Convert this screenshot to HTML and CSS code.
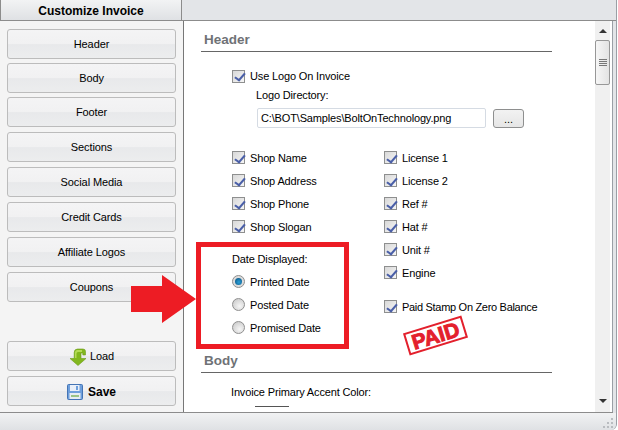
FILE: index.html
```html
<!DOCTYPE html>
<html lang="en">
<head>
    <meta charset="UTF-8">
    <title>Customize Invoice</title>
    <link rel="stylesheet" href="styles.css">
</head>
<body>
    <div class="window">
        <div class="tab-bar">
            <div class="tab">Customize Invoice</div>
        </div>

        <div class="main">
            <aside class="sidebar">
                <div class="nav-list">
                    <button class="nav-btn tight">Header</button>
                    <button class="nav-btn tight">Body</button>
                    <button class="nav-btn">Footer</button>
                    <button class="nav-btn">Sections</button>
                    <button class="nav-btn">Social Media</button>
                    <button class="nav-btn">Credit Cards</button>
                    <button class="nav-btn">Affiliate Logos</button>
                    <button class="nav-btn">Coupons</button>
                </div>
                <div class="action-list">
                    <button class="nav-btn">
                        <svg class="load-icon" viewBox="0 0 18 18">
                            <path d="M8.500 1h5.500a2.500 2.500 0 0 1 2.500 2.500V7h-2.700V5h-1.800v5.500H17L9 17.500 1 10.500h4.200V4.500A3.500 3.500 0 0 1 8.500 1z" fill="#82b71f" stroke="#6b9c18" stroke-width=".6"/>
                            <path d="M8 2h5v2H9a1.500 1.500 0 0 0-1.500 1.500V10H6V4.500A2.500 2.500 0 0 1 8 2z" fill="#b4dc55"/>
                        </svg>
                        Load
                    </button>
                    <button class="nav-btn save">
                        <svg class="save-icon" viewBox="0 0 16 16">
                            <rect x=".5" y=".5" width="15" height="15" rx="1" fill="#6e9fdc" stroke="#4474b5"/>
                            <rect x="3" y="1" width="9.500" height="6" fill="#e9eff8"/>
                            <rect x="9" y="2" width="2" height="4" fill="#6e9fdc"/>
                            <rect x="2.500" y="9" width="11" height="6" fill="#e8eef2"/>
                            <rect x="4" y="11" width="8" height="2" fill="#9cc486"/>
                        </svg>
                        Save
                    </button>
                </div>
            </aside>

            <section class="panel">
                <div class="panel-body">
                    <h2 class="section-title">Header</h2>

                    <label class="check logo-check"><span class="box"></span>Use Logo On Invoice</label>
                    <div class="logo-dir">Logo Directory:</div>
                    <div class="dir-row">
                        <div class="dir-input">C:\BOT\Samples\BoltOnTechnology.png</div>
                        <button class="browse">...</button>
                    </div>

                    <div class="options">
                        <div class="col">
                            <label class="check"><span class="box"></span>Shop Name</label>
                            <label class="check"><span class="box"></span>Shop Address</label>
                            <label class="check"><span class="box"></span>Shop Phone</label>
                            <label class="check"><span class="box"></span>Shop Slogan</label>
                            <div class="date-label">Date Displayed:</div>
                            <label class="radio"><span class="dot on"></span>Printed Date</label>
                            <label class="radio"><span class="dot"></span>Posted Date</label>
                            <label class="radio"><span class="dot"></span>Promised Date</label>
                        </div>
                        <div class="col">
                            <label class="check"><span class="box"></span>License 1</label>
                            <label class="check"><span class="box"></span>License 2</label>
                            <label class="check"><span class="box"></span>Ref #</label>
                            <label class="check"><span class="box"></span>Hat #</label>
                            <label class="check"><span class="box"></span>Unit #</label>
                            <label class="check"><span class="box"></span>Engine</label>
                            <label class="check paid-check"><span class="box"></span>Paid Stamp On Zero Balance</label>
                            <div class="stamp"><span>PAID</span></div>
                        </div>
                    </div>

                    <h2 class="section-title">Body</h2>
                    <div class="accent-label">Invoice Primary Accent Color:</div>
                    <div class="swatch"></div>
                </div>

                <div class="scrollbar">
                    <div class="arrow up"></div>
                    <div class="thumb"><div class="grip"></div></div>
                    <div class="arrow down"></div>
                </div>
            </section>
        </div>

        <div class="status-bar">
            <svg class="size-grip" viewBox="0 0 12 12">
                <g fill="#b9bcc0">
                    <rect x="8" y="0" width="2" height="2"/>
                    <rect x="4" y="4" width="2" height="2"/>
                    <rect x="8" y="4" width="2" height="2"/>
                    <rect x="0" y="8" width="2" height="2"/>
                    <rect x="4" y="8" width="2" height="2"/>
                    <rect x="8" y="8" width="2" height="2"/>
                </g>
            </svg>
        </div>
    </div>

    <!-- annotation drawn over the screenshot -->
    <div class="mark-box"></div>
    <svg class="mark-arrow" viewBox="0 0 66 48">
        <path d="M1 11h31V0l34 24-34 24V37H1z" fill="#ed1c24"/>
    </svg>
</body>
</html>
```

FILE: styles.css
```css
* {
    margin: 0;
    padding: 0;
    box-sizing: border-box;
}

body {
    width: 618px;
    height: 430px;
    overflow: hidden;
    position: relative;
    font-family: "Liberation Sans", sans-serif;
    font-size: 11px;
    letter-spacing: -0.15px;
    color: #000;
    background-color: #fff;
}

.window {
    width: 617px;
    height: 430px;
    display: flex;
    flex-direction: column;
    background-color: #e3e5e8;
    border-right: 1px solid #9a9fa5;
    border-bottom-right-radius: 6px;
}

.tab-bar {
    height: 21px;
    flex-shrink: 0;
    border-bottom: 1px solid #8c8c8c;
}

.tab {
    width: 182px;
    height: 20px;
    border-left: 1px solid #8c8c8c;
    border-right: 1px solid #8c8c8c;
    background: linear-gradient(#f2f3f4, #dfe1e4);
    font-size: 12px;
    font-weight: 700;
    letter-spacing: 0;
    text-align: center;
    line-height: 22px;
}

.main {
    height: 392px;
    display: flex;
    flex-shrink: 0;
    margin-right: 3px;
    border-bottom: 1px solid #8c8c8c;
}

.sidebar {
    width: 184px;
    flex-shrink: 0;
    display: flex;
    flex-direction: column;
    padding: 8px 7px 0;
    background-color: #f4f4f4;
    border-right: 1px solid #777;
}

.nav-list {
    display: flex;
    flex-direction: column;
    gap: 5px;
}

.action-list {
    display: flex;
    flex-direction: column;
    gap: 5px;
    margin-top: 39px;
}

.nav-btn {
    height: 30px;
    width: 169px;
    flex-shrink: 0;
    display: flex;
    align-items: center;
    justify-content: center;
    gap: 3px;
    border: 1px solid #bcbcbc;
    border-radius: 3px;
    background: linear-gradient(#f4f4f5 0%, #f1f1f2 50%, #e8e9eb 52%, #ecedee 100%);
    font-family: inherit;
    font-size: 11px;
    letter-spacing: -0.1px;
    color: #000;
}

.nav-btn.tight {
    margin-bottom: -1px;
}

.nav-btn.save {
    font-size: 12px;
    font-weight: 700;
    letter-spacing: 0;
    gap: 5px;
    padding-top: 1px;
}

.load-icon {
    width: 18px;
    height: 18px;
    margin-top: 1px;
}

.save-icon {
    width: 16px;
    height: 16px;
}

.panel {
    flex: 1;
    display: flex;
    min-width: 0;
    background-color: #fff;
    border-right: 1px solid #9a9fa5;
}

.panel-body {
    flex: 1;
    padding: 11px 0 0 17px;
    overflow: hidden;
}

.section-title {
    width: 351px;
    height: 20px;
    padding-left: 3px;
    border-bottom: 1px solid #666;
    font-size: 13.500px;
    font-weight: 700;
    letter-spacing: 0;
    line-height: 15px;
    color: #6f7276;
}

.check, .radio {
    display: flex;
    align-items: center;
    gap: 5px;
    height: 23px;
}

.logo-check {
    margin: 12px 0 0 31px;
    height: 24px;
}

.logo-dir {
    margin: 0 0 0 55px;
    height: 20px;
    line-height: 15px;
}

.dir-row {
    display: flex;
    gap: 7px;
    margin-left: 56px;
    height: 20px;
}

.dir-input {
    width: 229px;
    height: 20px;
    padding-left: 3px;
    border: 1px solid #d5dbe3;
    border-radius: 2px;
    line-height: 19px;
}

.browse {
    width: 31px;
    height: 19px;
    margin-top: 1px;
    border: 1px solid #8e8f8f;
    border-radius: 3px;
    background: linear-gradient(#f2f2f2, #e6e6e6);
    font-family: inherit;
    font-size: 11px;
}

.options {
    display: flex;
    margin: 18px 0 0 31px;
    height: 207px;
}

.col {
    display: flex;
    flex-direction: column;
    position: relative;
}

.col:first-child {
    width: 152px;
}

.box {
    width: 13px;
    height: 13px;
    flex-shrink: 0;
    position: relative;
    border: 1px solid #8e8f8f;
    background: linear-gradient(135deg, #d8d8d8, #f6f6f6);
}

/* tick */
.box::after {
    content: "";
    position: absolute;
    left: 3.500px;
    top: 0.500px;
    width: 4px;
    height: 8px;
    border-right: 2px solid #4a5fa8;
    border-bottom: 2px solid #4a5fa8;
    transform: rotate(35deg) skewX(-6deg);
}

.date-label {
    height: 18px;
    margin-top: 14px;
    line-height: 15px;
}

.dot {
    width: 13px;
    height: 13px;
    flex-shrink: 0;
    position: relative;
    border: 1px solid #8f8f8f;
    border-radius: 50%;
    background: radial-gradient(circle at 60% 65%, #f6f6f6, #c4c4c4);
}

.dot.on {
    background: #dcdcdc;
}

.dot.on::after {
    content: "";
    position: absolute;
    left: 2px;
    top: 2px;
    width: 7px;
    height: 7px;
    border-radius: 50%;
    background: radial-gradient(circle at 55% 60%, #2aa0d8, #064a78);
}

.paid-check {
    margin-top: 11px;
    letter-spacing: -0.3px;
}

.stamp {
    position: absolute;
    left: 21px;
    top: 178px;
    width: 61px;
    height: 23px;
    display: flex;
    align-items: center;
    justify-content: center;
    border: 2px solid #e3202c;
    transform: rotate(-17deg);
    color: #e3202c;
    font-size: 21px;
    font-weight: 700;
    letter-spacing: 0;
    line-height: 1;
    -webkit-text-stroke: 1px #e3202c;
}

.accent-label {
    margin: 12px 0 0 30px;
    height: 15px;
    line-height: 15px;
}

.swatch {
    width: 34px;
    height: 4px;
    margin: 6px 0 0 54px;
    border-top: 1px solid #555;
}

.scrollbar {
    width: 15px;
    flex-shrink: 0;
    margin-right: 2px;
    display: flex;
    flex-direction: column;
    align-items: center;
    background-color: #f0f0f0;
}

.arrow {
    width: 0;
    height: 0;
    flex-shrink: 0;
    border-left: 4px solid transparent;
    border-right: 4px solid transparent;
}

.arrow.up {
    margin-top: 8px;
    border-bottom: 4px solid #333;
}

.arrow.down {
    margin-top: auto;
    margin-bottom: 9px;
    border-top: 4px solid #333;
}

.thumb {
    width: 15px;
    height: 45px;
    margin-top: 7px;
    display: flex;
    align-items: center;
    justify-content: center;
    border: 1px solid #979797;
    border-radius: 2px;
    background: linear-gradient(90deg, #f6f6f6, #e3e3e3);
}

.grip {
    width: 8px;
    height: 8px;
    background: repeating-linear-gradient(#777 0 1px, transparent 1px 2px);
}

.status-bar {
    flex: 1;
    position: relative;
    background: linear-gradient(#f1f2f3, #dfe1e4);
    border-bottom-right-radius: 6px;
}

.size-grip {
    position: absolute;
    right: 1px;
    bottom: 0;
    width: 12px;
    height: 12px;
}

.mark-box {
    position: absolute;
    left: 196px;
    top: 242px;
    width: 153px;
    height: 107px;
    border: 5px solid #ed1c24;
}

.mark-arrow {
    position: absolute;
    left: 130px;
    top: 275px;
    width: 66px;
    height: 48px;
}
```
